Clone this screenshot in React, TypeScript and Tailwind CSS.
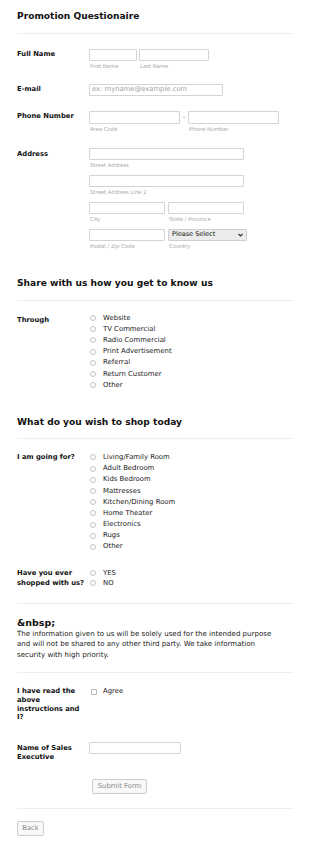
import React from "react";

const through = [
  "Website",
  "TV Commercial",
  "Radio Commercial",
  "Print Advertisement",
  "Referral",
  "Return Customer",
  "Other",
];

const shopFor = [
  "Living/Family Room",
  "Adult Bedroom",
  "Kids Bedroom",
  "Mattresses",
  "Kitchen/Dining Room",
  "Home Theater",
  "Electronics",
  "Rugs",
  "Other",
];

function Field({ className = "", placeholder }: { className?: string; placeholder?: string }) {
  return (
    <div className={`h-[12px] border border-[#d4d4d4] rounded-[1px] bg-white flex items-center px-[2px] ${className}`}>
      {placeholder && <span className="text-[6.8px] text-[#a3a3a3] leading-none">{placeholder}</span>}
    </div>
  );
}

function Sub({ children }: { children: React.ReactNode }) {
  return <div className="text-[5.3px] leading-[8px] text-[#a8a8a8] pl-[1px] mt-[1px]">{children}</div>;
}

function Label({ children, className = "" }: { children: React.ReactNode; className?: string }) {
  return (
    <div className={`w-[72px] shrink-0 text-[6.8px] font-bold leading-[8.7px] text-[#111] ${className}`}>
      {children}
    </div>
  );
}

function Radio({ text, h = "h-[11.2px]" }: { text: string; h?: string }) {
  return (
    <div className={`flex items-center ${h}`}>
      <span className="ml-[1px] w-[6px] h-[6px] rounded-full border border-[#c2c2c2] bg-white" />
      <span className="ml-[7px] text-[6.9px] leading-none text-[#222]">{text}</span>
    </div>
  );
}

function Divider({ className = "" }: { className?: string }) {
  return <div className={`border-t border-[#eeeeee] ${className}`} />;
}

function Heading({ children, className = "" }: { children: React.ReactNode; className?: string }) {
  return <h2 className={`text-[9.1px] font-bold leading-[11px] text-[#111] ${className}`}>{children}</h2>;
}

export default function App() {
  return (
    <div className="w-[310px] min-h-[844px] bg-white px-[17px] font-['DejaVu_Sans',Verdana,sans-serif] text-black">
      {/* Title */}
      <Heading className="pt-[10.5px]">Promotion Questionaire</Heading>
      <Divider className="mt-[11px]" />

      {/* Full name */}
      <div className="flex mt-[15px]">
        <Label className="pt-[1px]">Full Name</Label>
        <div className="flex gap-[2px]">
          <div>
            <Field className="w-[48px]" />
            <Sub>First Name</Sub>
          </div>
          <div>
            <Field className="w-[70px]" />
            <Sub>Last Name</Sub>
          </div>
        </div>
      </div>

      {/* Email */}
      <div className="flex mt-[14px]">
        <Label className="pt-[1.5px]">E-mail</Label>
        <Field className="w-[134px]" placeholder="ex: myname@example.com" />
      </div>

      {/* Phone */}
      <div className="flex mt-[15px]">
        <Label className="pt-[1.5px]">Phone Number</Label>
        <div className="flex">
          <div>
            <Field className="w-[91px] h-[13px]" />
            <Sub>Area Code</Sub>
          </div>
          <div className="w-[8px] text-center text-[6.7px] leading-[13px] text-[#777]">-</div>
          <div>
            <Field className="w-[91px] h-[13px]" />
            <Sub>Phone Number</Sub>
          </div>
        </div>
      </div>

      {/* Address */}
      <div className="flex mt-[15px]">
        <Label className="pt-[2.5px]">Address</Label>
        <div className="flex flex-col gap-[6px]">
          <div>
            <Field className="w-[155px]" />
            <Sub>Street Address</Sub>
          </div>
          <div>
            <Field className="w-[155px]" />
            <Sub>Street Address Line 2</Sub>
          </div>
          <div className="flex gap-[3px]">
            <div>
              <Field className="w-[76px]" />
              <Sub>City</Sub>
            </div>
            <div>
              <Field className="w-[76px]" />
              <Sub>State / Province</Sub>
            </div>
          </div>
          <div className="flex gap-[3px]">
            <div>
              <Field className="w-[76px]" />
              <Sub>Postal / Zip Code</Sub>
            </div>
            <div>
              <div className="w-[79px] h-[12px] border border-[#cfcfcf] rounded-[1px] bg-[#ececec] flex items-center justify-between pl-[3px] pr-[3px]">
                <span className="text-[6.5px] leading-none text-[#111]">Please Select</span>
                <svg width="5" height="4" viewBox="0 0 10 7">
                  <path d="M1 1.5 L5 5.5 L9 1.5" fill="none" stroke="#333" strokeWidth="2.4" />
                </svg>
              </div>
              <Sub>Country</Sub>
            </div>
          </div>
        </div>
      </div>

      {/* Share with us */}
      <Heading className="mt-[28.5px]">Share with us how you get to know us</Heading>
      <Divider className="mt-[10.5px]" />

      <div className="flex mt-[12px]">
        <Label className="pt-[3px]">Through</Label>
        <div className="flex flex-col">
          {through.map((t) => (
            <Radio key={t} text={t} />
          ))}
        </div>
      </div>

      {/* What to shop */}
      <Heading className="mt-[26.5px]">What do you wish to shop today</Heading>
      <Divider className="mt-[10px]" />

      <div className="flex mt-[12.5px]">
        <Label className="pt-[1.5px]">I am going for?</Label>
        <div className="flex flex-col">
          {shopFor.map((t) => (
            <Radio key={t} text={t} />
          ))}
        </div>
      </div>

      <div className="flex mt-[15.5px]">
        <Label className="leading-[10.3px]">Have you ever shopped with us?</Label>
        <div className="flex flex-col">
          <Radio text="YES" h="h-[10.3px]" />
          <Radio text="NO" h="h-[10.3px]" />
        </div>
      </div>

      <Divider className="mt-[14px]" />

      {/* Notice */}
      <div className="mt-[13px] text-[9.5px] font-bold leading-[11px] text-[#111]">&amp;nbsp;</div>
      <p className="mt-[1px] text-[7.05px] leading-[10.7px] text-[#222]">
        The information given to us will be solely used for the intended purpose
        <br />
        and will not be shared to any other third party. We take information
        <br />
        security with high priority.
      </p>

      <Divider className="mt-[11px]" />

      {/* Agree */}
      <div className="flex mt-[14.5px]">
        <Label>
          I have read the
          <br />
          above
          <br />
          instructions and
          <br />
          I?
        </Label>
        <div className="flex items-center h-[8.7px]">
          <span className="ml-[2px] w-[6px] h-[6px] rounded-[1px] border border-[#b5b5b5] bg-white" />
          <span className="ml-[6px] text-[6.9px] leading-none text-[#222]">Agree</span>
        </div>
      </div>

      {/* Sales exec */}
      <div className="flex mt-[20px]">
        <Label className="pt-[1.5px] leading-[9px]">
          Name of Sales
          <br />
          Executive
        </Label>
        <Field className="w-[92px]" />
      </div>

      <div className="flex mt-[17.5px] pl-[75px]">
        <button className="w-[55px] h-[15px] border border-[#cccccc] rounded-[2px] bg-[#f8f8f8] text-[6.8px] leading-none text-[#888]">
          Submit Form
        </button>
      </div>

      <Divider className="mt-[14px]" />

      <div className="flex mt-[11.5px] pb-[10px]">
        <button className="w-[27px] h-[15px] border border-[#cccccc] rounded-[2px] bg-[#f8f8f8] text-[6.8px] leading-none text-[#888]">
          Back
        </button>
      </div>
    </div>
  );
}
